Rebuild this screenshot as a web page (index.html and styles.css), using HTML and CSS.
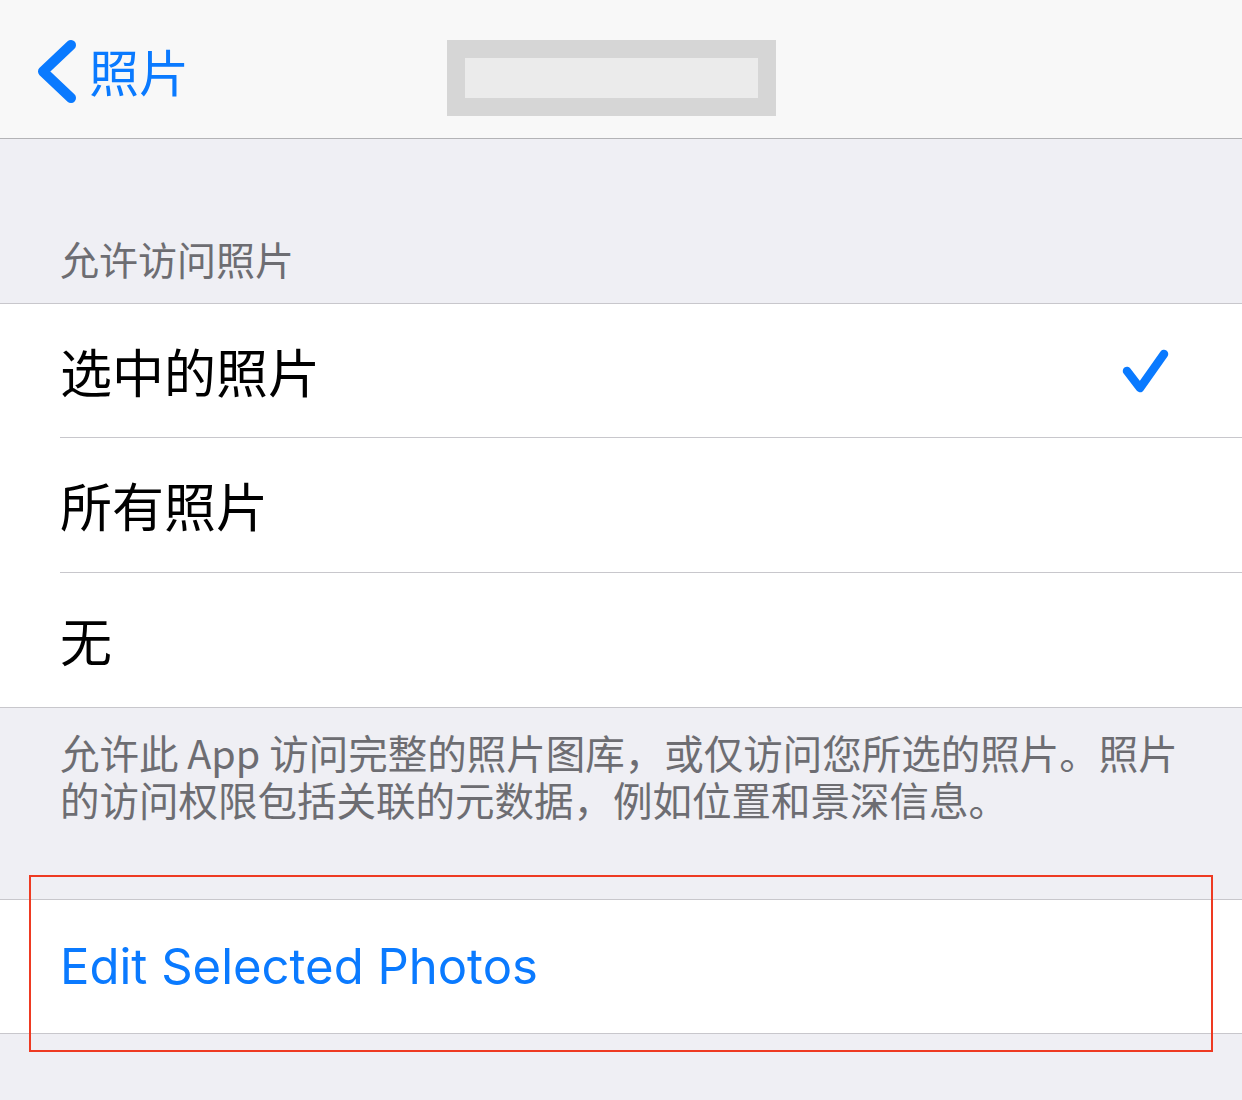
FILE: index.html
```html
<!DOCTYPE html>
<html lang="zh-CN">
<head>
<meta charset="utf-8">
<title>照片</title>
<link rel="stylesheet" href="styles.css">
</head>
<body>
<header class="nav">
  <a class="back">
    <svg class="chev" viewBox="0 0 44 65" width="44" height="65" aria-hidden="true">
      <path d="M34 6 L6 32.5 L34 59" fill="none" stroke="#0a7aff" stroke-width="10" stroke-linecap="round" stroke-linejoin="round"/>
    </svg>
    <span class="back-label">照片</span>
  </a>
  <div class="title-mask"><div class="title-mask-inner"></div></div>
</header>

<main class="page">
  <div class="section-header">允许访问照片</div>
  <ul class="list">
    <li class="row"><div class="row-inner"><span class="row-label">选中的照片</span>
      <svg class="check" viewBox="0 0 50 48" width="50" height="48" aria-hidden="true">
        <path d="M7 24 L20 41 L44 7" fill="none" stroke="#0a7aff" stroke-width="8.5" stroke-linecap="round" stroke-linejoin="round"/>
      </svg></div></li>
    <li class="row"><div class="row-inner"><span class="row-label">所有照片</span></div></li>
    <li class="row"><div class="row-inner"><span class="row-label">无</span></div></li>
  </ul>
  <p class="section-footer">允许此 App 访问完整的照片图库，或仅访问您所选的照片。照片的访问权限包括关联的元数据，例如位置和景深信息。</p>

  <ul class="list list-action">
    <li class="row"><div class="row-inner"><span class="action-label">Edit Selected Photos</span></div></li>
  </ul>
  <div class="annotation"></div>
</main>
</body>
</html>
```

FILE: styles.css
```css
* { box-sizing: border-box; }

html, body {
  margin: 0;
  padding: 0;
}

body {
  width: 1242px;
  height: 1100px;
  overflow: hidden;
  background: #efeff4;
  font-family: "Noto Sans CJK SC", "Noto Sans", sans-serif;
  color: #000;
}

.nav {
  height: 139px;
  background: #f8f8f8;
  border-bottom: 1px solid #b3b3b6;
  display: grid;
  grid-template-columns: 447px 329px 1fr;
  align-items: start;
}

.back {
  display: flex;
  align-items: flex-start;
  padding-left: 37px;
  margin-top: 39px;
  color: #0a7aff;
  text-decoration: none;
}

.chev {
  display: block;
  flex: none;
}

.back-label {
  margin-left: 8px;
  margin-top: 1px;
  font-size: 50px;
  line-height: 60px;
  color: #0a7aff;
}

.title-mask {
  margin-top: 40px;
  height: 76px;
  background: #d6d6d6;
  padding: 18px;
}

.title-mask-inner {
  height: 40px;
  background: #ebebeb;
}

.page {
  position: relative;
}

.section-header {
  padding: 95px 60px 21px;
  font-size: 39px;
  line-height: 48px;
  color: #6d6d72;
}

.list {
  list-style: none;
  margin: 0;
  padding: 0;
  background: #fff;
  border-top: 1px solid #c8c7cc;
  border-bottom: 1px solid #c8c7cc;
}

.row {
  padding-left: 60px;
}

.row-inner {
  height: 135px;
  display: flex;
  align-items: center;
  border-bottom: 1px solid #c8c7cc;
}

.row:first-child .row-inner {
  height: 134px;
}

.row:last-child .row-inner {
  border-bottom: none;
  height: 134px;
}

.list-action .row:first-child .row-inner {
  height: 133px;
}

.row-label {
  font-size: 52px;
  line-height: 60px;
}

.check {
  display: block;
  margin-left: auto;
  margin-right: 72px;
}

.section-footer {
  margin: 0;
  padding: 20px 60px 77px 60px;
  font-size: 39.5px;
  line-height: 47px;
  color: #6d6d72;
}

.action-label {
  font-family: "Inter", "Liberation Sans", sans-serif;
  font-size: 49px;
  line-height: 60px;
  color: #0a7aff;
}

.annotation {
  position: absolute;
  left: 29px;
  top: 736px;
  width: 1184px;
  height: 177px;
  border: 2px solid #ee3a22;
  pointer-events: none;
}
```
